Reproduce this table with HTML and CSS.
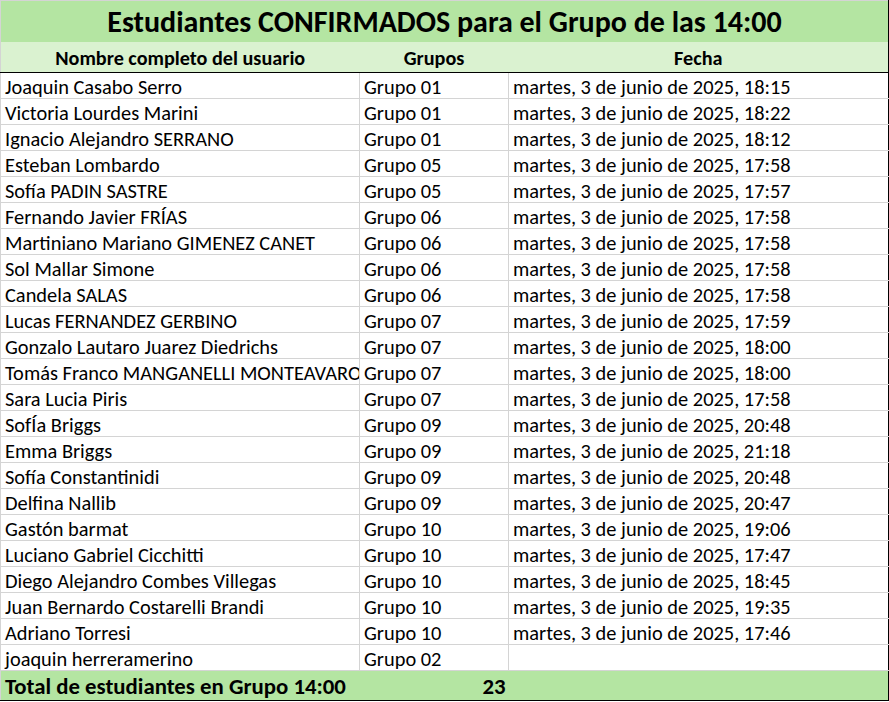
FILE: index.html
```html
<!DOCTYPE html>
<html lang="es">
<head>
<meta charset="utf-8">
<link rel="stylesheet" href="styles.css">
</head>
<body>
<table class="sheet">
  <colgroup>
    <col class="c-name"><col class="c-group"><col class="c-date">
  </colgroup>
  <thead>
    <tr class="title-row"><th colspan="3">Estudiantes CONFIRMADOS para el Grupo de las 14:00</th></tr>
    <tr class="head-row"><th>Nombre completo del usuario</th><th>Grupos</th><th>Fecha</th></tr>
  </thead>
  <tbody>
    <tr><td>Joaquin Casabo Serro</td><td>Grupo 01</td><td>martes, 3 de junio de 2025, 18:15</td></tr>
    <tr><td>Victoria Lourdes Marini</td><td>Grupo 01</td><td>martes, 3 de junio de 2025, 18:22</td></tr>
    <tr><td>Ignacio Alejandro SERRANO</td><td>Grupo 01</td><td>martes, 3 de junio de 2025, 18:12</td></tr>
    <tr><td>Esteban Lombardo</td><td>Grupo 05</td><td>martes, 3 de junio de 2025, 17:58</td></tr>
    <tr><td>Sofía PADIN SASTRE</td><td>Grupo 05</td><td>martes, 3 de junio de 2025, 17:57</td></tr>
    <tr><td>Fernando Javier FRÍAS</td><td>Grupo 06</td><td>martes, 3 de junio de 2025, 17:58</td></tr>
    <tr><td>Martiniano Mariano GIMENEZ CANET</td><td>Grupo 06</td><td>martes, 3 de junio de 2025, 17:58</td></tr>
    <tr><td>Sol Mallar Simone</td><td>Grupo 06</td><td>martes, 3 de junio de 2025, 17:58</td></tr>
    <tr><td>Candela SALAS</td><td>Grupo 06</td><td>martes, 3 de junio de 2025, 17:58</td></tr>
    <tr><td>Lucas FERNANDEZ GERBINO</td><td>Grupo 07</td><td>martes, 3 de junio de 2025, 17:59</td></tr>
    <tr><td>Gonzalo Lautaro Juarez Diedrichs</td><td>Grupo 07</td><td>martes, 3 de junio de 2025, 18:00</td></tr>
    <tr><td>Tomás Franco MANGANELLI MONTEAVARO</td><td>Grupo 07</td><td>martes, 3 de junio de 2025, 18:00</td></tr>
    <tr><td>Sara Lucia Piris</td><td>Grupo 07</td><td>martes, 3 de junio de 2025, 17:58</td></tr>
    <tr><td>SofÍa Briggs</td><td>Grupo 09</td><td>martes, 3 de junio de 2025, 20:48</td></tr>
    <tr><td>Emma Briggs</td><td>Grupo 09</td><td>martes, 3 de junio de 2025, 21:18</td></tr>
    <tr><td>Sofía Constantinidi</td><td>Grupo 09</td><td>martes, 3 de junio de 2025, 20:48</td></tr>
    <tr><td>Delfina Nallib</td><td>Grupo 09</td><td>martes, 3 de junio de 2025, 20:47</td></tr>
    <tr><td>Gastón barmat</td><td>Grupo 10</td><td>martes, 3 de junio de 2025, 19:06</td></tr>
    <tr><td>Luciano Gabriel Cicchitti</td><td>Grupo 10</td><td>martes, 3 de junio de 2025, 17:47</td></tr>
    <tr><td>Diego Alejandro Combes Villegas</td><td>Grupo 10</td><td>martes, 3 de junio de 2025, 18:45</td></tr>
    <tr><td>Juan Bernardo Costarelli Brandi</td><td>Grupo 10</td><td>martes, 3 de junio de 2025, 19:35</td></tr>
    <tr><td>Adriano Torresi</td><td>Grupo 10</td><td>martes, 3 de junio de 2025, 17:46</td></tr>
    <tr><td>joaquin herreramerino</td><td>Grupo 02</td><td></td></tr>
  </tbody>
  <tfoot>
    <tr class="total-row"><td>Total de estudiantes en Grupo 14:00</td><td class="num">23</td><td></td></tr>
  </tfoot>
</table>
</body>
</html>
```
FILE: styles.css
```css
html, body {
  margin: 0;
  padding: 0;
  background: #ffffff;
}
body {
  font-family: Carlito, "Open Sans", "Liberation Sans", sans-serif;
  color: #000;
}
.sheet {
  border-collapse: collapse;
  table-layout: fixed;
  width: 888px;
  border-top: 1px solid #d4d4d4;
  border-left: 1px solid #d4d4d4;
  border-right: 1px solid #000;
  border-bottom: 1px solid #000;
}
.c-name { width: 359px; }
.c-group { width: 149px; }
.c-date { width: 380px; }

.title-row th {
  background: #b4e5a2;
  height: 41px;
  padding: 0;
  font-size: 30px;
  font-weight: bold;
  text-align: center;
  vertical-align: middle;
  line-height: 1;
}
.head-row th {
  background: #daf2d0;
  height: 28px;
  padding: 2px 0 0;
  font-size: 20.2px;
  font-weight: bold;
  text-align: center;
  border-bottom: 1px solid #000;
  line-height: 1;
}
tbody td {
  height: 22px;
  padding: 3px 4px 0;
  font-size: 20.4px;
  line-height: 1;
  white-space: nowrap;
  overflow: hidden;
  text-overflow: clip;
  border: 1px solid #d4d4d4;
  border-top: none;
  vertical-align: middle;
}
tbody tr:first-child td { border-top: 1px solid #000; }
tbody td:last-child { border-right: 1px solid #000; }
.total-row td {
  background: #b4e5a2;
  height: 28px;
  padding: 1px 4px 0;
  font-size: 22.8px;
  line-height: 1;
  font-weight: bold;
  white-space: nowrap;
}
.total-row td.num { text-align: right; padding-right: 3px; }
```
